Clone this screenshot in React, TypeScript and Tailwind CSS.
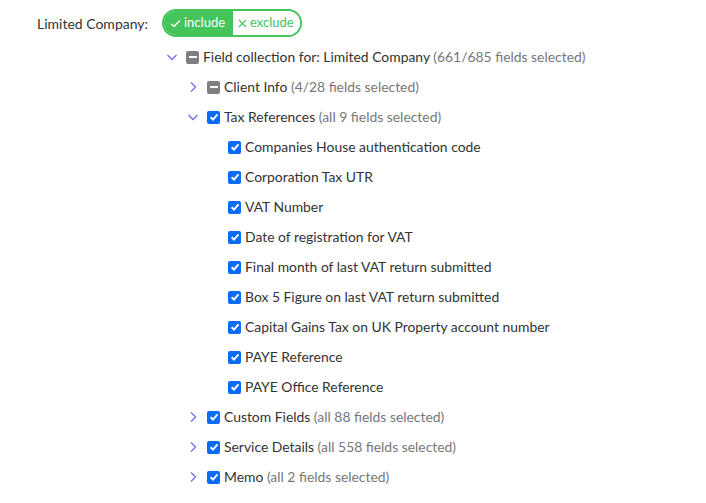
import React from "react";

const Chevron = ({ open }: { open: boolean }) => (
  <svg width="12" height="12" viewBox="0 0 12 12" className="shrink-0">
    {open ? (
      <path d="M1.5 4 L6 8.5 L10.5 4" fill="none" stroke="#6a6ef5" strokeWidth="1.3" />
    ) : (
      <path d="M4 1.5 L8.5 6 L4 10.5" fill="none" stroke="#6a6ef5" strokeWidth="1.3" />
    )}
  </svg>
);

const Box = ({ mixed }: { mixed?: boolean }) =>
  mixed ? (
    <span className="w-[13px] h-[13px] rounded-[2px] bg-[#7f7f7f] flex items-center justify-center shrink-0">
      <span className="w-[8px] h-[2px] bg-white" />
    </span>
  ) : (
    <span className="w-[13px] h-[13px] rounded-[2px] bg-[#0a6cf5] flex items-center justify-center shrink-0">
      <svg width="10" height="10" viewBox="0 0 10 10">
        <path d="M1.6 5.2 L4 7.5 L8.5 2.3" fill="none" stroke="white" strokeWidth="1.9" />
      </svg>
    </span>
  );

type RowProps = { level: number; chevron?: "open" | "closed"; mixed?: boolean; label: string; note?: string };

const Row = ({ level, chevron, mixed, label, note }: RowProps) => {
  const pl = level === 1 ? "pl-[166px]" : level === 2 ? "pl-[187px]" : "pl-[208px]";
  return (
    <div className={`h-[30px] flex items-center ${pl}`}>
      <span className="w-[20px] flex items-center shrink-0">{chevron ? <Chevron open={chevron === "open"} /> : null}</span>
      <Box mixed={mixed} />
      <span className="ml-[4px] text-[13.9px] text-[#333333] whitespace-nowrap">
        {label}
        {note ? <span className="text-[#777777]"> {note}</span> : null}
      </span>
    </div>
  );
};

export default function App() {
  const fields = [
    "Companies House authentication code",
    "Corporation Tax UTR",
    "VAT Number",
    "Date of registration for VAT",
    "Final month of last VAT return submitted",
    "Box 5 Figure on last VAT return submitted",
    "Capital Gains Tax on UK Property account number",
    "PAYE Reference",
    "PAYE Office Reference",
  ];
  return (
    <div className="w-[706px] h-[503px] bg-white overflow-hidden" style={{ fontFamily: "Lato, 'Noto Sans', sans-serif" }}>
      <div className="flex items-center pt-[9px] h-[37px]">
        <span className="pl-[37px] w-[162px] text-[14px] text-[#333333]">Limited Company:</span>
        <div className="flex h-[28px] rounded-full border-2 border-[#44c45a] overflow-hidden text-[13px]">
          <span className="bg-[#44c45a] text-white flex items-center pl-[6px] pr-[8px] gap-[3px]">
            <svg width="11" height="11" viewBox="0 0 11 11">
              <path d="M1.2 5.8 L4 8.5 L9.8 2.5" fill="none" stroke="white" strokeWidth="1.3" />
            </svg>
            include
          </span>
          <span className="bg-white text-[#44c45a] flex items-center pl-[5px] pr-[6px] gap-[3px]">
            <svg width="9" height="9" viewBox="0 0 9 9">
              <path d="M1 1 L8 8 M8 1 L1 8" fill="none" stroke="#44c45a" strokeWidth="1.1" />
            </svg>
            exclude
          </span>
        </div>
      </div>
      <div className="pt-[5px]">
        <Row level={1} chevron="open" mixed label="Field collection for: Limited Company" note="(661/685 fields selected)" />
        <Row level={2} chevron="closed" mixed label="Client Info" note="(4/28 fields selected)" />
        <Row level={2} chevron="open" label="Tax References" note="(all 9 fields selected)" />
        {fields.map((f) => (
          <Row key={f} level={3} label={f} />
        ))}
        <Row level={2} chevron="closed" label="Custom Fields" note="(all 88 fields selected)" />
        <Row level={2} chevron="closed" label="Service Details" note="(all 558 fields selected)" />
        <Row level={2} chevron="closed" label="Memo" note="(all 2 fields selected)" />
      </div>
    </div>
  );
}
